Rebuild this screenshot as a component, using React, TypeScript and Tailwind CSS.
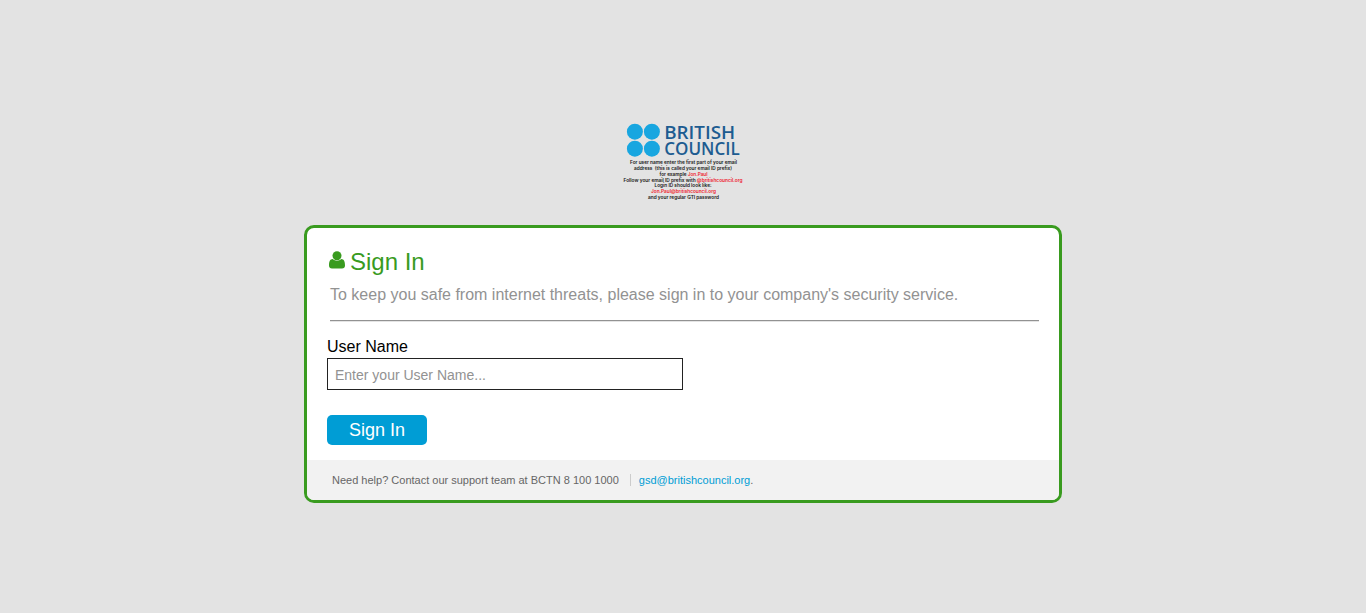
import React from "react";

type Span = { text: string; red?: boolean };
type Line = { y: number; x: number; width: number; spans: Span[] };

const captionLines: Line[] = [
  { y: 44.4, x: 11, width: 107, spans: [{ text: "For user name enter the first part of your email" }] },
  { y: 50.2, x: 15, width: 98, spans: [{ text: "address  (this is called your email ID prefix)" }] },
  { y: 56, x: 40.5, width: 48, spans: [{ text: "for example " }, { text: "Jon.Paul", red: true }] },
  { y: 61.8, x: 4.5, width: 119, spans: [{ text: "Follow your email ID prefix with " }, { text: "@britishcouncil.org", red: true }] },
  { y: 67.4, x: 35.5, width: 57, spans: [{ text: "Login ID should look like:" }] },
  { y: 73.2, x: 32, width: 65, spans: [{ text: "Jon.Paul@britishcouncil.org", red: true }] },
  { y: 79, x: 29, width: 71, spans: [{ text: "and your regular GTI password" }] },
];

function Logo() {
  return (
    <svg width="128" height="84" viewBox="0 0 128 84" className="block">
      <g fill="#18a6e0">
        <circle cx="15.9" cy="11.7" r="8" />
        <circle cx="32.9" cy="11.7" r="8" />
        <circle cx="15.9" cy="28.7" r="8" />
        <circle cx="32.9" cy="28.7" r="8" />
      </g>
      <g fill="#1d5c91" fontSize="18.3" fontWeight="600" className="font-['Open_Sans',sans-serif]">
        <text x="45.2" y="18.5" textLength="71" lengthAdjust="spacingAndGlyphs">BRITISH</text>
        <text x="45.2" y="34.8" textLength="75.500" lengthAdjust="spacingAndGlyphs">COUNCIL</text>
      </g>
      <g fontSize="4.9" fontWeight="600" fill="#181818" className="font-['Inter',sans-serif]">
        {captionLines.map((line) => (
          <text
            key={line.y}
            x={line.x}
            y={line.y}
            textLength={line.width}
            lengthAdjust="spacingAndGlyphs"
            xmlSpace="preserve"
          >
            {line.spans.map((s) => (
              <tspan key={s.text} fill={s.red ? "#ee1c2e" : "#181818"}>{s.text}</tspan>
            ))}
          </text>
        ))}
      </g>
    </svg>
  );
}

function UserIcon() {
  return (
    <svg width="16" height="18" viewBox="0 0 16 18" fill="#399b1f" className="mt-[23px] block">
      <circle cx="8" cy="4.700" r="4.500" />
      <path d="M3.700 8C5 9.200 6.400 9.700 8 9.700S11 9.200 12.300 8C15 8.200 16 10.500 16 14.500C16 16.600 14.900 17.500 13 17.500H3C1.100 17.500 0 16.600 0 14.500C0 10.500 1 8.200 3.700 8Z" />
    </svg>
  );
}

export default function App() {
  return (
    <div className="flex min-h-screen flex-col items-center bg-[#e3e3e3] pt-[120px] font-['Liberation_Sans',Arial,sans-serif]">
      <div className="h-[105px]">
        <Logo />
      </div>
      <main className="flex h-[278px] w-[758px] flex-col overflow-hidden rounded-[10px] border-[3px] border-[#399b1f] bg-white">
        <div className="flex h-[52px] pl-[22px]">
          <UserIcon />
          <h1 className="ml-[5px] mt-[20px] text-[24px] leading-[28px] text-[#399b1f]">Sign In</h1>
        </div>
        <p className="ml-[23px] mt-[5px] h-[20px] whitespace-nowrap text-[16px] leading-[20px] text-[#929292]">
          To keep you safe from internet threats, please sign in to your company's security service.
        </p>
        <hr className="ml-[23px] mr-[20px] mt-[15px] h-[2px] border-t border-b border-t-[#929292] border-b-[#e4e4e4]" />
        <form className="ml-[20px] mt-[15px] flex flex-col items-start" onSubmit={(e) => e.preventDefault()}>
          <label htmlFor="user" className="h-[21px] text-[16px] leading-[20px] text-black">User Name</label>
          <input
            id="user"
            type="text"
            placeholder="Enter your User Name..."
            className="h-[32px] w-[356px] border border-[#222222] bg-white px-[7px] pt-[2px] text-[14px] text-black placeholder:text-[#929292]"
          />
          <button type="submit" className="mt-[25px] h-[30px] w-[100px] rounded-[5px] bg-[#009dd5] text-[18px] leading-[30px] text-white">
            Sign In
          </button>
        </form>
        <footer className="mt-[15px] flex h-[40px] items-center bg-[#f2f2f2] pl-[25px] text-[11px] leading-[12px] text-[#666666]">
          <span>Need help? Contact our support team at BCTN 8 100 1000</span>
          <span className="ml-[11px] h-[12px] border-l border-[#cccccc] pl-[8px]">
            <a href="#" className="text-[#009dd5]">gsd@britishcouncil.org</a>.
          </span>
        </footer>
      </main>
    </div>
  );
}
